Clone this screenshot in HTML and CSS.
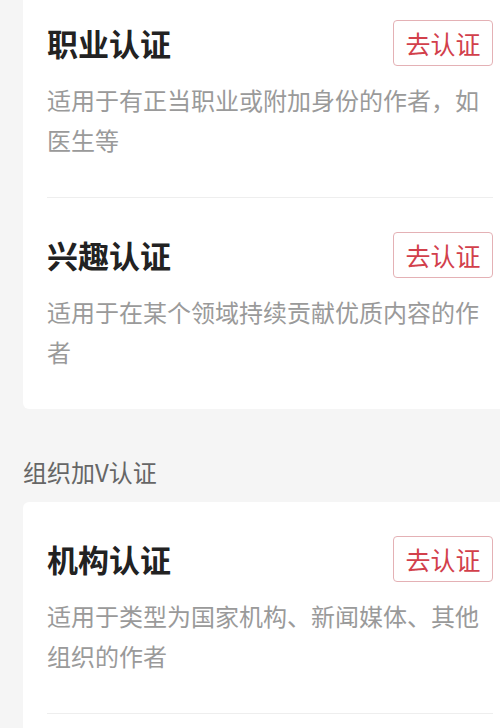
FILE: index.html
```html
<!DOCTYPE html>
<html lang="zh-CN">
<head>
    <meta charset="UTF-8">
    <title>加V认证</title>
    <link rel="stylesheet" href="styles.css">
</head>
<body>
    <div class="page">
        <div class="card">
            <div class="item">
                <div class="item-head">
                    <span class="title">职业认证</span>
                    <button class="btn">去认证</button>
                </div>
                <p class="desc">适用于有正当职业或附加身份的作者，如医生等</p>
            </div>
            <div class="item">
                <div class="item-head">
                    <span class="title">兴趣认证</span>
                    <button class="btn">去认证</button>
                </div>
                <p class="desc">适用于在某个领域持续贡献优质内容的作者</p>
            </div>
        </div>

        <div class="section-label">组织加V认证</div>

        <div class="card card-continued">
            <div class="item item-divided">
                <div class="item-head">
                    <span class="title">机构认证</span>
                    <button class="btn">去认证</button>
                </div>
                <p class="desc">适用于类型为国家机构、新闻媒体、其他组织的作者</p>
            </div>
        </div>
    </div>
</body>
</html>
```

FILE: styles.css
```css
body {
    margin: 0;
    background: #f5f5f5;
    font-family: "Noto Sans CJK SC", "Noto Sans", sans-serif;
    overflow: hidden;
}
.page {
    margin-top: -14px;
}
.card {
    margin-left: 23px;
    background: #fff;
    border-radius: 6px 0 0 6px;
}
/* 下に続く項目がある場合 */
.card-continued {
    padding-bottom: 40px;
}
.item {
    margin: 0 7px 0 24px;
    padding: 34px 0 37px;
}
.item + .item {
    border-top: 1px solid #eeeeee;
}
.item-divided {
    border-bottom: 1px solid #eeeeee;
}
.item-head {
    display: flex;
    justify-content: space-between;
    align-items: center;
    height: 46px;
}
.title {
    font-size: 31px;
    font-weight: bold;
    color: #222;
    line-height: 46px;
}
.btn {
    box-sizing: border-box;
    width: 100px;
    height: 46px;
    padding: 0;
    border: 1px solid #e4b1b5;
    border-radius: 4px;
    background: #fff;
    color: #d2404b;
    font-family: inherit;
    font-size: 25px;
    line-height: 44px;
}
.desc {
    margin: 14px 0 0;
    font-size: 24px;
    line-height: 40px;
    color: #9a9a9a;
}
.section-label {
    padding: 46px 0 13px 23px;
    font-size: 24px;
    line-height: 34px;
    color: #666;
}
```
